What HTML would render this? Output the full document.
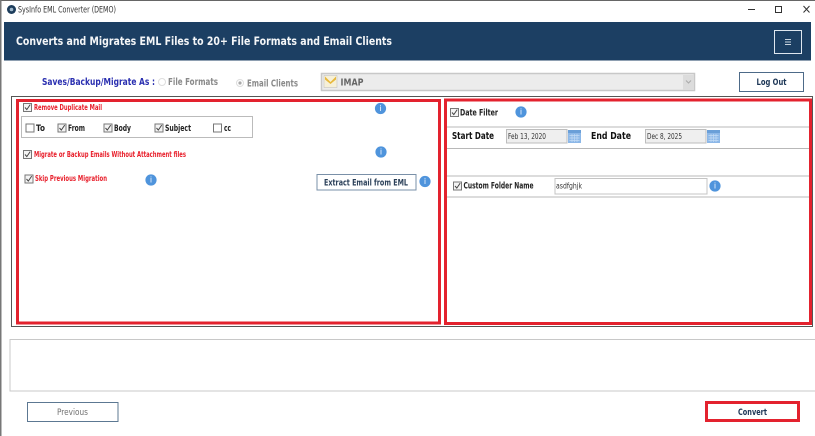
<!DOCTYPE html>
<html><head><meta charset="utf-8"><title>SysInfo EML Converter (DEMO)</title>
<style>
html,body{margin:0;padding:0;background:#fff;width:815px;height:436px;overflow:hidden}
svg{display:block;filter:blur(.35px)}
text{font-family:"DejaVu Sans","Liberation Sans",sans-serif}
.b{font-weight:bold}
.r{fill:#e8202c;font-weight:bold;font-size:7.5px}
.k{fill:#222;font-weight:bold;font-size:8.500px}
.d{fill:#333;font-size:7.500px}
</style></head><body>
<svg width="815" height="436" viewBox="0 0 815 436" xmlns="http://www.w3.org/2000/svg">
<defs>
<g id="i"><circle r="5.6" fill="#4f94dc"/><rect x="-.5" y="-2" width="1" height="4.5" fill="#cfe2f7"/><rect x="-.5" y="-3.6" width="1" height="1" fill="#cfe2f7"/></g>
<g id="c"><rect x=".5" y=".5" width="8" height="8" fill="#f4f4f4" stroke="#777"/><path d="M2 4.500L3.800 6.600L7.200 1.600" fill="none" stroke="#444" stroke-width="1"/></g>
<g id="u"><rect x=".5" y=".5" width="8" height="8" fill="#fff" stroke="#777"/></g>
<g id="cal"><rect width="13" height="13" fill="#8db8e8"/><rect y="0" width="13" height="3" fill="#6a9fd8"/><path d="M1.500 5.500H11.500M1.500 8H11.500M1.500 10.500H11.500M4 4V12M6.500 4V12M9 4V12" stroke="#c4dcf5" stroke-width=".7" fill="none"/></g>
</defs>
<rect width="815" height="1" fill="#666"/>
<rect x="0" y="0" width="1.500" height="436" fill="#777"/>

<!-- title bar -->
<circle cx="11.500" cy="9.500" r="4.500" fill="#1d3d5c"/><circle cx="11.500" cy="9.500" r="1.800" fill="#9fb8cc"/>
<text x="18" y="12.500" font-size="8.500" fill="#333" textLength="98" lengthAdjust="spacingAndGlyphs">SysInfo EML Converter (DEMO)</text>
<rect x="748" y="9" width="7" height="1" fill="#333"/>
<rect x="775.500" y="6.500" width="6" height="6" fill="none" stroke="#333"/>
<path d="M803.500 6L809.500 12.500M809.500 6L803.500 12.500" stroke="#333" fill="none"/>

<!-- header -->
<rect x="4" y="22" width="807" height="38.500" fill="#1c3f63"/>
<text class="b" x="16" y="45" font-size="11.500" fill="#f4f6f8" textLength="376" lengthAdjust="spacingAndGlyphs">Converts and Migrates EML Files to 20+ File Formats and Email Clients</text>
<rect x="774.500" y="30.500" width="27" height="23" fill="none" stroke="#dfe7ef"/>
<path d="M785 39.500H791M785 42H791M785 44.500H791" stroke="#c9d4df" fill="none"/>

<!-- options row -->
<text class="b" x="42" y="85" font-size="9.500" fill="#2a2fb0" textLength="113" lengthAdjust="spacingAndGlyphs">Saves/Backup/Migrate As :</text>
<circle cx="162" cy="82" r="3.500" fill="#fff" stroke="#ddd"/>
<text class="b" x="168" y="85" font-size="9.500" fill="#8a8a8a" textLength="50" lengthAdjust="spacingAndGlyphs">File Formats</text>
<circle cx="240" cy="83" r="3.500" fill="#fff" stroke="#ddd"/><circle cx="240" cy="83" r="1.600" fill="#aaa"/>
<text class="b" x="247" y="86.500" font-size="9.500" fill="#8a8a8a" textLength="51" lengthAdjust="spacingAndGlyphs">Email Clients</text>
<rect x="321.500" y="73.500" width="373" height="17" fill="#ececec" stroke="#c8c8c8" stroke-width="1.500"/>
<rect x="683" y="75" width="11" height="15" fill="#dcdcdc"/>
<path d="M686 80.500L688.500 83L691 80.500" stroke="#aaa" fill="none"/>
<rect x="324" y="75.500" width="13" height="12" fill="#f6f0d8" stroke="#bbb" stroke-width=".5"/>
<path d="M325 76.500L330.500 82L336 76.500V79.500L330.500 84L325 79.500Z" fill="#e8b83c"/>
<text class="b" x="340.500" y="85.500" font-size="9.500" fill="#666" textLength="23" lengthAdjust="spacingAndGlyphs">IMAP</text>
<rect x="739.500" y="72.500" width="64" height="19" fill="#fff" stroke="#4d6a88"/>
<text class="b" x="756.500" y="85" font-size="8.500" fill="#1c3656" textLength="30" lengthAdjust="spacingAndGlyphs">Log Out</text>

<!-- outer frame -->
<rect x="11.500" y="96.500" width="801" height="230" fill="#fff" stroke="#555"/>

<!-- left panel -->
<rect x="17.500" y="100.500" width="422" height="222.500" fill="#fff" stroke="#e3222e" stroke-width="3"/>
<use href="#c" x="23" y="103"/>
<text class="r" x="34" y="110" textLength="68" lengthAdjust="spacingAndGlyphs">Remove Duplicate Mail</text>
<rect x="21.500" y="116.500" width="231" height="21" fill="#fff" stroke="#bbb"/>
<use href="#u" x="25.500" y="123.500"/><text class="k" x="36" y="131" textLength="9" lengthAdjust="spacingAndGlyphs">To</text>
<use href="#c" x="57.500" y="123.500"/><text class="k" x="68" y="131" textLength="17" lengthAdjust="spacingAndGlyphs">From</text>
<use href="#c" x="103.500" y="123.500"/><text class="k" x="114" y="131" textLength="17" lengthAdjust="spacingAndGlyphs">Body</text>
<use href="#c" x="154.500" y="123.500"/><text class="k" x="165" y="131" textLength="26" lengthAdjust="spacingAndGlyphs">Subject</text>
<use href="#u" x="213" y="123.500"/><text class="k" x="224" y="131" textLength="7" lengthAdjust="spacingAndGlyphs">cc</text>
<use href="#c" x="23" y="150"/>
<text class="r" x="34" y="157" textLength="152" lengthAdjust="spacingAndGlyphs">Migrate or Backup Emails Without Attachment files</text>
<use href="#c" x="24.500" y="174.500"/>
<text class="r" x="35" y="181" textLength="72" lengthAdjust="spacingAndGlyphs">Skip Previous Migration</text>
<use href="#i" x="380.500" y="108.500"/>
<use href="#i" x="381" y="152"/>
<use href="#i" x="151" y="180"/>
<use href="#i" x="425" y="181.500"/>
<rect x="317" y="174.500" width="99" height="15.500" fill="#fff" stroke="#7a90a8"/>
<text class="b" x="324" y="185.500" font-size="8.500" fill="#2a3f58" textLength="84" lengthAdjust="spacingAndGlyphs">Extract Email from EML</text>

<!-- right panel -->
<rect x="445.500" y="100" width="365" height="223.500" fill="#fff" stroke="#e3222e" stroke-width="3"/>
<path d="M447 127H809M447 148.500H809M447 176H809M447 197H809" stroke="#b8b8b8" fill="none"/>
<use href="#c" x="450" y="108"/>
<text class="k" x="460" y="115.500" textLength="38" lengthAdjust="spacingAndGlyphs">Date Filter</text>
<use href="#i" x="521" y="112"/>
<text class="b" x="452" y="139" font-size="9.500" fill="#111" textLength="42" lengthAdjust="spacingAndGlyphs">Start Date</text>
<rect x="506.500" y="129.500" width="60.500" height="13.500" fill="#efefef" stroke="#bdbdbd"/>
<text class="d" x="508" y="139" textLength="38" lengthAdjust="spacingAndGlyphs">Feb 13, 2020</text>
<use href="#cal" x="568" y="130"/>
<text class="b" x="591" y="139" font-size="9.500" fill="#111" textLength="40" lengthAdjust="spacingAndGlyphs">End Date</text>
<rect x="645.500" y="129.500" width="60.500" height="13.500" fill="#efefef" stroke="#bdbdbd"/>
<text class="d" x="647" y="139" textLength="35" lengthAdjust="spacingAndGlyphs">Dec 8, 2025</text>
<use href="#cal" x="707" y="130"/>
<use href="#c" x="453" y="181.500"/>
<text class="k" x="463.500" y="188.500" font-size="8px" textLength="70" lengthAdjust="spacingAndGlyphs">Custom Folder Name</text>
<rect x="555" y="178.500" width="152" height="15.500" fill="#fff" stroke="#c4c4c4"/>
<text class="d" x="556" y="188.500" textLength="26" lengthAdjust="spacingAndGlyphs">asdfghjk</text>
<use href="#i" x="715" y="186"/>

<!-- bottom -->
<rect x="10" y="339.500" width="810" height="51.500" fill="#fff" stroke="#c8c8c8"/>
<rect x="27.500" y="402.500" width="90.500" height="19" fill="#fff" stroke="#5c7892"/>
<text x="57" y="415" font-size="8.500" fill="#707070" textLength="31" lengthAdjust="spacingAndGlyphs">Previous</text>
<rect x="706.500" y="402.500" width="92" height="18" fill="#fff" stroke="#e3222e" stroke-width="3"/>
<text class="b" x="738" y="415" font-size="8.500" fill="#1c3656" textLength="29" lengthAdjust="spacingAndGlyphs">Convert</text>
</svg>
</body></html>
